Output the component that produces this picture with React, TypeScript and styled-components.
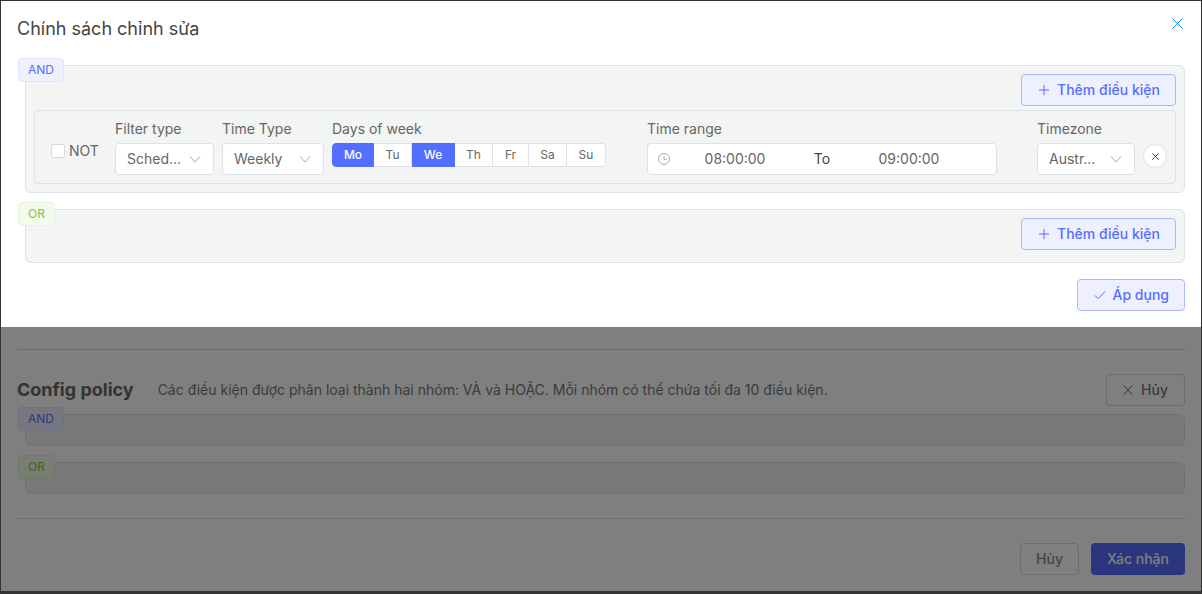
import React from 'react';
import styled, { createGlobalStyle } from 'styled-components';

const DAYS = [
    { label: 'Mo', active: true, width: 42 },
    { label: 'Tu', active: false, width: 38 },
    { label: 'We', active: true, width: 43 },
    { label: 'Th', active: false, width: 38 },
    { label: 'Fr', active: false, width: 36 },
    { label: 'Sa', active: false, width: 38 },
    { label: 'Su', active: false, width: 39 },
];

const PlusIcon = (): JSX.Element => (
    <svg width="12" height="12" viewBox="0 0 12 12" fill="none" stroke="currentColor" strokeWidth="1">
        <path d="M6 1v10M1 6h10" />
    </svg>
);

const CheckIcon = (): JSX.Element => (
    <svg width="12" height="12" viewBox="0 0 12 12" fill="none" stroke="currentColor" strokeWidth="1">
        <path d="M1 6.5l3.2 3.2L11 2.5" />
    </svg>
);

const CrossIcon = ({ size = 12 }: { size?: number }): JSX.Element => (
    <svg width={size} height={size} viewBox="0 0 12 12" fill="none" stroke="currentColor" strokeWidth={12 / size}>
        <path d="M0.5 0.5l11 11M11.5 0.5l-11 11" />
    </svg>
);

const ChevronIcon = (): JSX.Element => (
    <svg width="12" height="12" viewBox="0 0 12 12" fill="none" stroke="#a9a9a9" strokeWidth="1">
        <path d="M1 3.5l5 5.5 5-5.5" />
    </svg>
);

const ClockIcon = (): JSX.Element => (
    <svg width="12" height="12" viewBox="0 0 12 12" fill="none" stroke="#a9a9a9" strokeWidth="1">
        <circle cx="6" cy="6" r="5.5" />
        <path d="M6 3v3.3h2.8" />
    </svg>
);

const Select = ({ value, width }: { value: string; width: number }): JSX.Element => (
    <SSelect $width={width}>
        <SSelectValue>{value}</SSelectValue>
        <ChevronIcon />
    </SSelect>
);

const App = (): JSX.Element => (
    <SShell>
        <GlobalStyle />
        <SPage>
            <SHiddenTop />
            <SDivider />
            <SConfigHead>
                <SConfigTitle>Config policy</SConfigTitle>
                <SConfigText>Các điều kiện được phân loại thành hai nhóm: VÀ và HOẶC. Mỗi nhóm có thể chứa tối đa 10 điều kiện.</SConfigText>
                <SCancelButton>
                    <CrossIcon size={10} />
                    Hủy
                </SCancelButton>
            </SConfigHead>
            <SPageGroups>
                <SGroup $empty>
                    <SBadge $kind="and">AND</SBadge>
                </SGroup>
                <SGroup $empty>
                    <SBadge $kind="or">OR</SBadge>
                </SGroup>
            </SPageGroups>
            <SFooterDivider />
            <SFooter>
                <SFooterCancel>Hủy</SFooterCancel>
                <SConfirm>Xác nhận</SConfirm>
            </SFooter>

            <SOverlay />
            <SModal>
                <STitle>Chính sách chỉnh sửa</STitle>
                <SClose>
                    <CrossIcon size={11} />
                </SClose>
                <SGroups>
                    <SGroup>
                        <SBadge $kind="and">AND</SBadge>
                        <SGroupActions>
                            <SPrimaryButton>
                                <PlusIcon />
                                Thêm điều kiện
                            </SPrimaryButton>
                        </SGroupActions>
                        <SCondition>
                            <SNot>
                                <SCheckbox />
                                NOT
                            </SNot>
                            <SField>
                                <SLabel>Filter type</SLabel>
                                <Select value="Sched..." width={99} />
                            </SField>
                            <SField>
                                <SLabel>Time Type</SLabel>
                                <Select value="Weekly" width={102} />
                            </SField>
                            <SField>
                                <SLabel>Days of week</SLabel>
                                <SDays>
                                    {DAYS.map((day) => (
                                        <SDay key={day.label} $active={day.active} $width={day.width}>{day.label}</SDay>
                                    ))}
                                </SDays>
                            </SField>
                            <SField $offset={33}>
                                <SLabel>Time range</SLabel>
                                <STimeRange>
                                    <ClockIcon />
                                    <STimeValues>
                                        <STime>08:00:00</STime>
                                        <STo>To</STo>
                                        <STime>09:00:00</STime>
                                    </STimeValues>
                                </STimeRange>
                            </SField>
                            <SField $offset={32}>
                                <SLabel>Timezone</SLabel>
                                <Select value="Austr..." width={98} />
                            </SField>
                            <SRemove>
                                <CrossIcon size={7} />
                            </SRemove>
                        </SCondition>
                    </SGroup>
                    <SGroup>
                        <SBadge $kind="or">OR</SBadge>
                        <SGroupActions>
                            <SPrimaryButton>
                                <PlusIcon />
                                Thêm điều kiện
                            </SPrimaryButton>
                        </SGroupActions>
                    </SGroup>
                </SGroups>
                <SModalFooter>
                    <SPrimaryButton>
                        <CheckIcon />
                        Áp dụng
                    </SPrimaryButton>
                </SModalFooter>
            </SModal>
        </SPage>
    </SShell>
);

const BRAND = '#546fff';
const BORDER = '#dde1e8';
const MUTED = '#666666';

const GlobalStyle = createGlobalStyle`
    html, body {
        margin: 0;
        padding: 0;
        background: #333333;
    }
    * {
        box-sizing: border-box;
    }
`;

const SShell = styled.div`
    width: 1202px;
    height: 594px;
    padding: 1px 1px 3px 1px;
    background: #333333;
    font-family: Inter, "Noto Sans", sans-serif;
    font-size: 14px;
    line-height: 20px;
    overflow: hidden;
`;

const SPage = styled.div`
    position: relative;
    height: 100%;
    padding: 0 16px;
    background: #ffffff;
    overflow: hidden;
`;

const SHiddenTop = styled.div`
    height: 348px;
`;

const SDivider = styled.div`
    height: 1px;
    background: #d9d9d9;
`;

const SConfigHead = styled.div`
    display: flex;
    align-items: center;
    margin-top: 24px;
    height: 32px;
`;

const SConfigTitle = styled.div`
    font-size: 18px;
    font-weight: 700;
    color: #666666;
`;

const SConfigText = styled.div`
    margin-left: 24px;
    color: #777777;
`;

const SCancelButton = styled.div`
    display: flex;
    align-items: center;
    gap: 8px;
    height: 32px;
    margin-left: auto;
    padding: 0 16px;
    border: 1px solid #d9d9d9;
    border-radius: 4px;
    color: #777777;
    font-weight: 500;
`;

const SPageGroups = styled.div`
    display: flex;
    flex-direction: column;
    gap: 16px;
    margin-top: 8px;
`;

const SFooterDivider = styled(SDivider)`
    margin-top: 24px;
`;

const SFooter = styled.div`
    display: flex;
    justify-content: flex-end;
    gap: 12px;
    margin-top: 24px;
`;

const SFooterCancel = styled.div`
    display: flex;
    align-items: center;
    height: 32px;
    padding: 0 15px;
    border: 1px solid #d9d9d9;
    border-radius: 4px;
    color: #888888;
    font-weight: 500;
`;

const SConfirm = styled.div`
    display: flex;
    align-items: center;
    height: 32px;
    padding: 0 16px;
    border-radius: 4px;
    background: ${BRAND};
    color: #ffffff;
    font-weight: 500;
`;

const SOverlay = styled.div`
    position: absolute;
    inset: 0;
    background: rgba(0, 0, 0, 0.5);
`;

const SModal = styled.div`
    position: absolute;
    top: 0;
    left: 0;
    right: 0;
    padding: 16px;
    background: #ffffff;
`;

const STitle = styled.div`
    margin-bottom: 24px;
    font-size: 18px;
    line-height: 24px;
    color: #444444;
`;

const SClose = styled.div`
    position: absolute;
    top: 17px;
    right: 18px;
    display: flex;
    color: #1890ff;
`;

const SGroups = styled.div`
    display: flex;
    flex-direction: column;
    gap: 16px;
    margin-left: 8px;
`;

const SGroup = styled.div<{ $empty?: boolean }>`
    position: relative;
    margin-left: ${(props) => (props.$empty ? '8px' : '0')};
    min-height: 32px;
    padding: ${(props) => (props.$empty ? '0' : '8px')};
    border: 1px solid ${BORDER};
    border-radius: 6px;
    background: ${(props) => (props.$empty ? '#eef0f4' : '#f3f4f4')};
`;

const SBadge = styled.div<{ $kind: 'and' | 'or' }>`
    position: absolute;
    top: -8px;
    left: -8px;
    height: 24px;
    padding: 0 9px;
    font-size: 12px;
    line-height: 22px;
    border-radius: 4px;
    border: 1px solid ${(props) => (props.$kind === 'and' ? '#dfe3ff' : '#e3f5d5')};
    background: ${(props) => (props.$kind === 'and' ? '#eef0ff' : '#f3fbec')};
    color: ${(props) => (props.$kind === 'and' ? BRAND : '#7cc83c')};
`;

const SGroupActions = styled.div`
    display: flex;
    justify-content: flex-end;
    margin-bottom: 4px;
`;

const SPrimaryButton = styled.div`
    display: flex;
    align-items: center;
    gap: 7px;
    height: 32px;
    padding: 0 15px 0 16px;
    border: 1px solid #a9b7ff;
    border-radius: 4px;
    background: #eef0ff;
    color: ${BRAND};
    font-weight: 500;
`;

const SCondition = styled.div`
    display: flex;
    gap: 8px;
    padding: 8px 8px 8px 16px;
    border: 1px solid ${BORDER};
    border-radius: 4px;
`;

const SNot = styled.div`
    display: flex;
    align-items: center;
    gap: 4px;
    width: 56px;
    margin-top: 8px;
    height: 16px;
    align-self: center;
    color: ${MUTED};
`;

const SCheckbox = styled.span`
    width: 14px;
    height: 14px;
    border: 1px solid #d9d9d9;
    border-radius: 2px;
    background: #ffffff;
`;

const SField = styled.div<{ $offset?: number }>`
    margin-left: ${(props) => props.$offset ?? 0}px;
`;

const SLabel = styled.div`
    margin-bottom: 4px;
    color: ${MUTED};
`;

const SSelect = styled.div<{ $width: number }>`
    display: flex;
    align-items: center;
    justify-content: space-between;
    width: ${(props) => props.$width}px;
    height: 32px;
    padding: 0 12px 0 11px;
    border: 1px solid ${BORDER};
    border-radius: 4px;
    background: #ffffff;
`;

const SSelectValue = styled.span`
    color: ${MUTED};
`;

const SDays = styled.div`
    display: flex;
    height: 24px;
    border-radius: 4px;
    background: #ffffff;
`;

const SDay = styled.div<{ $active: boolean; $width: number }>`
    width: ${(props) => props.$width}px;
    text-align: center;
    font-size: 12px;
    line-height: 21px;
    font-weight: ${(props) => (props.$active ? 500 : 400)};
    border: 1px solid ${(props) => (props.$active ? BRAND : BORDER)};
    border-left-width: 0;
    background: ${(props) => (props.$active ? BRAND : '#ffffff')};
    color: ${(props) => (props.$active ? '#ffffff' : MUTED)};

    &:first-child {
        border-left-width: 1px;
        border-radius: 4px 0 0 4px;
    }

    &:last-child {
        border-radius: 0 4px 4px 0;
    }
`;

const STimeRange = styled.div`
    display: flex;
    align-items: center;
    width: 350px;
    height: 32px;
    padding-left: 10px;
    border: 1px solid ${BORDER};
    border-radius: 4px;
    background: #ffffff;
`;

const STimeValues = styled.div`
    display: grid;
    grid-template-columns: 130px 44px 130px;
    text-align: center;
`;

const STime = styled.span`
    color: ${MUTED};
`;

const STo = styled.span`
    color: #444444;
`;

const SRemove = styled.div`
    display: flex;
    align-items: center;
    justify-content: center;
    align-self: flex-end;
    width: 24px;
    height: 24px;
    margin-bottom: 7px;
    border: 1px solid ${BORDER};
    border-radius: 50%;
    background: #ffffff;
    color: #444444;
`;

const SModalFooter = styled.div`
    display: flex;
    justify-content: flex-end;
    margin-top: 16px;
`;

export default App;
